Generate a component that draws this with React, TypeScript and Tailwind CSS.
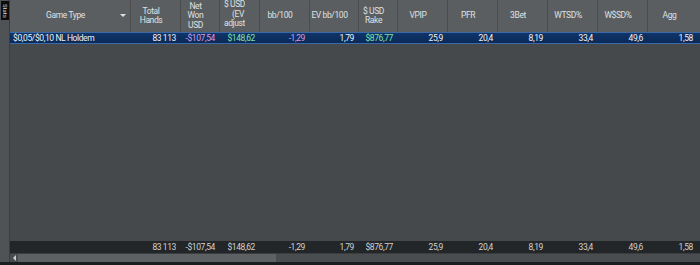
import React from "react";

const cols = [
  { title: "Game Type", w: "w-[121px]", s: "" },
  { title: "Total Hands", w: "w-[50px]", s: "max-w-[30px]" },
  { title: "Net Won USD", w: "w-[39px]", s: "max-w-[20px]" },
  { title: "$ USD (EV adjusted)", w: "w-[40px]", s: "" },
  { title: "bb/100", w: "w-[50px]", s: "" },
  { title: "EV bb/100", w: "w-[49px]", s: "whitespace-nowrap" },
  { title: "$ USD Rake", w: "w-[39px]", s: "max-w-[22px]" },
  { title: "VPIP", w: "w-[50px]", s: "" },
  { title: "PFR", w: "w-[50px]", s: "" },
  { title: "3Bet", w: "w-[50px]", s: "" },
  { title: "WTSD%", w: "w-[50px]", s: "" },
  { title: "W$SD%", w: "w-[50px]", s: "" },
  { title: "Agg", w: "flex-1", s: "" },
];

const green = "text-[#7fe3a8]";
const pink = "text-[#d59ae6]";
const white = "text-[#eef1f5]";

const rowValues = [
  { v: "83 113", c: white },
  { v: "-$107,54", c: pink },
  { v: "$148,62", c: green },
  { v: "-1,29", c: pink },
  { v: "1,79", c: white },
  { v: "$876,77", c: green },
  { v: "25,9", c: white },
  { v: "20,4", c: white },
  { v: "8,19", c: white },
  { v: "33,4", c: white },
  { v: "49,6", c: white },
  { v: "1,58", c: white },
];

function Cells({ colored }: { colored: boolean }) {
  return (
    <>
      {rowValues.map((r, i) => (
        <div
          key={i}
          className={`${cols[i + 1].w} shrink-0 text-right whitespace-nowrap ${
            i === rowValues.length - 1 ? "pr-[7px]" : "pr-[5px]"
          } ${colored ? r.c : "text-[#cfd2d4]"}`}
        >
          {r.v}
        </div>
      ))}
    </>
  );
}

export default function App() {
  return (
    <div
      className="w-[700px] h-[265px] flex bg-[#1c1d1e] overflow-hidden text-[8.5px] leading-[12px] tracking-[-0.4px]"
      style={{ fontFamily: 'Roboto, "Open Sans", sans-serif' }}
    >
      {/* side tab strip */}
      <div className="w-[10px] h-[262px] shrink-0 bg-[#505356] border-r border-[#3a3c3e] relative">
        <div className="absolute left-[1px] top-[1px] w-[8px] h-[19px] bg-[#0c0c0c] flex items-center justify-center">
          <span
            className="text-[6px] leading-[6px] tracking-normal text-[#d8d8d8]"
            style={{ writingMode: "vertical-rl" }}
          >
            Stats
          </span>
        </div>
      </div>

      <div className="flex-1 flex flex-col h-[262px]">
        {/* header */}
        <div className="h-[32px] flex bg-[#5b5e60] shrink-0">
          {cols.map((c, i) =>
            i === 3 ? (
              <div
                key={i}
                className={`${c.w} shrink-0 h-full border-r border-[#4a4c4e] text-[#dfe1e2] leading-[9.5px] overflow-hidden pl-[4px]`}
              >
                <div className="w-[21px] overflow-hidden">
                  <div className="text-center whitespace-nowrap">$ USD</div>
                  <div className="text-right pr-[1px] whitespace-nowrap">(EV</div>
                  <div className="whitespace-nowrap">adjusted)</div>
                </div>
              </div>
            ) : (
              <div
                key={i}
                className={`${c.w} shrink-0 h-full border-r border-[#4a4c4e] last:border-r-0 flex items-center justify-center text-center text-[#dfe1e2] leading-[9.5px] overflow-hidden relative pr-[10px] pl-[1px]`}
              >
                <span className={c.s}>{c.title}</span>
                {i === 0 && (
                  <span className="absolute right-[4px] top-[14px] w-0 h-0 border-l-[3px] border-r-[3px] border-t-[3px] border-l-transparent border-r-transparent border-t-[#dfe1e2]" />
                )}
              </div>
            )
          )}
        </div>

        {/* selected data row */}
        <div className="h-[12px] shrink-0 flex items-center bg-gradient-to-b from-[#0f3469] to-[#0a2a58] border-y border-[#3d6aa6]">
          <div className="w-[121px] shrink-0 pl-[3px] text-[#eef1f5] whitespace-nowrap">
            $0,05/$0,10 NL Holdem
          </div>
          <Cells colored />
        </div>

        {/* empty body */}
        <div className="flex-1 bg-[#46494b]" />

        {/* totals row */}
        <div className="h-[12px] shrink-0 flex items-center bg-[#232628]">
          <div className="w-[121px] shrink-0" />
          <Cells colored={false} />
        </div>

        {/* horizontal scrollbar */}
        <div className="h-[9px] shrink-0 flex bg-[#4a4d4f] border-t border-[#3b3e40]">
          <div className="w-[8px] flex items-center justify-center">
            <span className="w-0 h-0 border-t-[3px] border-b-[3px] border-r-[3px] border-t-transparent border-b-transparent border-r-[#d0d0d0]" />
          </div>
          <div className="w-[258px] bg-[#5e6163]" />
        </div>
      </div>
    </div>
  );
}
